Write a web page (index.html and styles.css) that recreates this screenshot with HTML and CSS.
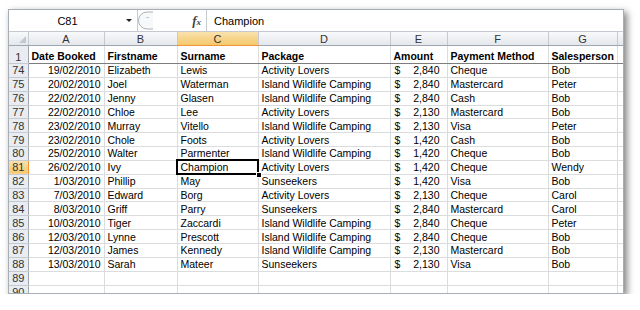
FILE: index.html
```html
<!DOCTYPE html>
<html lang="en">
<head>
<meta charset="UTF-8">
<title>Bookings</title>
<link rel="stylesheet" href="styles.css">
</head>
<body>
<div class="sheet">
    <div class="fbar">
        <div class="namebox">
            <span class="ref">C81</span>
            <span class="arrow"></span>
        </div>
        <div class="mid">
            <svg class="knob" width="16" height="19" viewBox="0 0 16 19">
                <path d="M15 1 H9 A8.5 8.5 0 0 0 9 18 H15" fill="#f7f8fa" stroke="#aab0b8"/>
                <path d="M8 6.5 H11" stroke="#c3c8ce" stroke-width="1"/>
            </svg>
            <span class="fx"><i>f</i><small>x</small></span>
        </div>
        <div class="formula">Champion</div>
    </div>

    <table class="grid">
        <colgroup>
            <col style="width:19px">
            <col style="width:76px">
            <col style="width:73px">
            <col style="width:81px">
            <col style="width:132px">
            <col style="width:57px">
            <col style="width:101px">
            <col style="width:69px">
            <col style="width:24px">
        </colgroup>
        <tr class="heads">
            <th class="corner"><span class="tri"></span></th>
            <th>A</th><th>B</th><th class="sel">C</th><th>D</th><th>E</th><th>F</th><th>G</th><th></th>
        </tr>
        <tr class="titles">
            <th class="rh">1</th>
            <td>Date Booked</td><td>Firstname</td><td>Surname</td><td>Package</td><td>Amount</td><td>Payment Method</td><td>Salesperson</td><td></td>
        </tr>
        <tr><th class="rh">74</th><td class="num">19/02/2010</td><td>Elizabeth</td><td>Lewis</td><td>Activity Lovers</td><td><div class="amt"><span>$</span><span>2,840</span></div></td><td>Cheque</td><td>Bob</td><td></td></tr>
        <tr><th class="rh">75</th><td class="num">20/02/2010</td><td>Joel</td><td>Waterman</td><td>Island Wildlife Camping</td><td><div class="amt"><span>$</span><span>2,840</span></div></td><td>Mastercard</td><td>Peter</td><td></td></tr>
        <tr><th class="rh">76</th><td class="num">22/02/2010</td><td>Jenny</td><td>Glasen</td><td>Island Wildlife Camping</td><td><div class="amt"><span>$</span><span>2,840</span></div></td><td>Cash</td><td>Bob</td><td></td></tr>
        <tr><th class="rh">77</th><td class="num">22/02/2010</td><td>Chloe</td><td>Lee</td><td>Activity Lovers</td><td><div class="amt"><span>$</span><span>2,130</span></div></td><td>Mastercard</td><td>Bob</td><td></td></tr>
        <tr><th class="rh">78</th><td class="num">23/02/2010</td><td>Murray</td><td>Vitello</td><td>Island Wildlife Camping</td><td><div class="amt"><span>$</span><span>2,130</span></div></td><td>Visa</td><td>Peter</td><td></td></tr>
        <tr><th class="rh">79</th><td class="num">23/02/2010</td><td>Chole</td><td>Foots</td><td>Activity Lovers</td><td><div class="amt"><span>$</span><span>1,420</span></div></td><td>Cash</td><td>Bob</td><td></td></tr>
        <tr><th class="rh">80</th><td class="num">25/02/2010</td><td>Walter</td><td>Parmenter</td><td>Island Wildlife Camping</td><td><div class="amt"><span>$</span><span>1,420</span></div></td><td>Cheque</td><td>Bob</td><td></td></tr>
        <tr><th class="rh sel">81</th><td class="num">26/02/2010</td><td>Ivy</td><td class="active">Champion<span class="handle"></span></td><td>Activity Lovers</td><td><div class="amt"><span>$</span><span>1,420</span></div></td><td>Cheque</td><td>Wendy</td><td></td></tr>
        <tr><th class="rh">82</th><td class="num">1/03/2010</td><td>Phillip</td><td>May</td><td>Sunseekers</td><td><div class="amt"><span>$</span><span>1,420</span></div></td><td>Visa</td><td>Bob</td><td></td></tr>
        <tr><th class="rh">83</th><td class="num">7/03/2010</td><td>Edward</td><td>Borg</td><td>Activity Lovers</td><td><div class="amt"><span>$</span><span>2,130</span></div></td><td>Cheque</td><td>Carol</td><td></td></tr>
        <tr><th class="rh">84</th><td class="num">8/03/2010</td><td>Griff</td><td>Parry</td><td>Sunseekers</td><td><div class="amt"><span>$</span><span>2,840</span></div></td><td>Mastercard</td><td>Carol</td><td></td></tr>
        <tr><th class="rh">85</th><td class="num">10/03/2010</td><td>Tiger</td><td>Zaccardi</td><td>Island Wildlife Camping</td><td><div class="amt"><span>$</span><span>2,840</span></div></td><td>Cheque</td><td>Peter</td><td></td></tr>
        <tr><th class="rh">86</th><td class="num">12/03/2010</td><td>Lynne</td><td>Prescott</td><td>Island Wildlife Camping</td><td><div class="amt"><span>$</span><span>2,840</span></div></td><td>Cheque</td><td>Bob</td><td></td></tr>
        <tr><th class="rh">87</th><td class="num">12/03/2010</td><td>James</td><td>Kennedy</td><td>Island Wildlife Camping</td><td><div class="amt"><span>$</span><span>2,130</span></div></td><td>Mastercard</td><td>Bob</td><td></td></tr>
        <tr><th class="rh">88</th><td class="num">13/03/2010</td><td>Sarah</td><td>Mateer</td><td>Sunseekers</td><td><div class="amt"><span>$</span><span>2,130</span></div></td><td>Visa</td><td>Bob</td><td></td></tr>
        <tr><th class="rh">89</th><td></td><td></td><td></td><td></td><td></td><td></td><td></td><td></td></tr>
        <tr><th class="rh">90</th><td></td><td></td><td></td><td></td><td></td><td></td><td></td><td></td></tr>
    </table>
</div>
</body>
</html>
```

FILE: styles.css
```css
body {
    margin: 0;
    background: #fff;
    font-family: 'Liberation Sans', Arial, sans-serif;
    color: #000;
}
.sheet {
    box-sizing: border-box;
    margin: 9px 0 0 8px;
    width: 616px;
    height: 285px;
    overflow: hidden;
    background: #fff;
    border: 1px solid #a7adb5;
    box-shadow: 3px 3px 7px rgba(0, 0, 0, 0.5);
}
.fbar {
    display: flex;
    height: 21px;
    border-bottom: 1px solid #c4c9d0;
    font-size: 11px;
}
.namebox {
    width: 128px;
    display: flex;
    align-items: center;
    border-right: 1px solid #c6cbd1;
}
.ref {
    flex: 1;
    text-align: center;
}
.arrow {
    width: 0;
    height: 0;
    margin-right: 5px;
    border-left: 3px solid transparent;
    border-right: 3px solid transparent;
    border-top: 3px solid #222;
}
.mid {
    width: 68px;
    display: flex;
    align-items: center;
    justify-content: space-between;
    border-right: 1px solid #c6cbd1;
}
.knob {
    display: block;
}
.fx {
    font-family: 'Liberation Serif', serif;
    font-size: 13px;
    font-weight: bold;
    color: #444;
    margin-right: 5px;
}
.fx small {
    font-size: 9px;
    font-style: italic;
}
.formula {
    flex: 1;
    display: flex;
    align-items: center;
    padding-left: 7px;
}
.grid {
    table-layout: fixed;
    width: 632px;
    border-collapse: collapse;
    font-size: 10.5px;
}
.grid th, .grid td {
    height: 12.85px;
    padding: 0 3px;
    line-height: 12px;
    white-space: nowrap;
    overflow: hidden;
    border: 1px solid #dadcdd;
}
.grid td {
    text-align: left;
}
.heads th {
    height: 13px;
    font-weight: normal;
    font-size: 11px;
    color: #333;
    text-align: center;
    background: linear-gradient(#f8f9fb, #e4e7eb);
    border: 1px solid #c5cad1;
    border-top: none;
    border-bottom-color: #9ea5ae;
}
.heads th.sel {
    background: linear-gradient(#fae2ae, #f5c86c);
    border-bottom-color: #f29536;
}
.corner {
    position: relative;
    border-left: none !important;
}
.tri {
    position: absolute;
    right: 2px;
    bottom: 2px;
    width: 0;
    height: 0;
    border-left: 7px solid transparent;
    border-bottom: 7px solid #c3c8cf;
}
.rh {
    padding: 0 !important;
    font-weight: normal;
    font-size: 11px;
    color: #333;
    text-align: center;
    background: #e9ecf0;
    border-left: none !important;
    border-top-color: #c5cad1 !important;
    border-bottom-color: #c5cad1 !important;
    border-right-color: #9ea5ae !important;
}
.rh.sel {
    background: linear-gradient(#fae2ae, #f5c86c);
    border-right-color: #f29536 !important;
}
.titles td, .titles th {
    height: 16px;
    vertical-align: bottom;
    padding-bottom: 1px;
    border-bottom: 1px solid #7d7d7d;
}
.titles td {
    font-weight: bold;
}
.num {
    text-align: right !important;
}
.amt {
    display: flex;
    justify-content: space-between;
    padding: 0 4px 0 1px;
}
.active {
    position: relative;
    overflow: visible !important;
    outline: 2px solid #000;
    outline-offset: -1px;
}
.handle {
    position: absolute;
    right: -4px;
    bottom: -4px;
    width: 4px;
    height: 4px;
    background: #000;
    border: 1px solid #fff;
}
```
